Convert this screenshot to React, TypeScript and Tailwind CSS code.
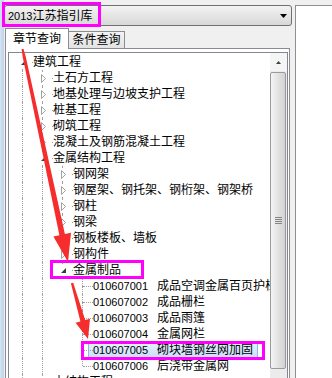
import React from 'react';

type Row = {
  label: string;
  code?: string;
  glyph?: 'open' | 'closed';
  guides: boolean[];
  up: boolean;
  down: boolean;
  selected?: boolean;
};

const L2 = [true];
const L3 = [true, true];
const L4 = [true, true, false];

const rows: Row[] = [
  { label: '建筑工程', glyph: 'open', guides: [], up: false, down: true },
  { label: '土石方工程', glyph: 'closed', guides: L2, up: true, down: true },
  { label: '地基处理与边坡支护工程', glyph: 'closed', guides: L2, up: true, down: true },
  { label: '桩基工程', glyph: 'closed', guides: L2, up: true, down: true },
  { label: '砌筑工程', glyph: 'closed', guides: L2, up: true, down: true },
  { label: '混凝土及钢筋混凝土工程', glyph: 'closed', guides: L2, up: true, down: true },
  { label: '金属结构工程', glyph: 'open', guides: L2, up: true, down: true },
  { label: '钢网架', glyph: 'closed', guides: L3, up: true, down: true },
  { label: '钢屋架、钢托架、钢桁架、钢架桥', glyph: 'closed', guides: L3, up: true, down: true },
  { label: '钢柱', glyph: 'closed', guides: L3, up: true, down: true },
  { label: '钢梁', glyph: 'closed', guides: L3, up: true, down: true },
  { label: '钢板楼板、墙板', glyph: 'closed', guides: L3, up: true, down: true },
  { label: '钢构件', glyph: 'closed', guides: L3, up: true, down: true },
  { label: '金属制品', glyph: 'open', guides: L3, up: true, down: false },
  { code: '010607001', label: '成品空调金属百页护栏', guides: L4, up: true, down: true },
  { code: '010607002', label: '成品栅栏', guides: L4, up: true, down: true },
  { code: '010607003', label: '成品雨篷', guides: L4, up: true, down: true },
  { code: '010607004', label: '金属网栏', guides: L4, up: true, down: true },
  { code: '010607005', label: '砌块墙钢丝网加固', guides: L4, up: true, down: true, selected: true },
  { code: '010607006', label: '后浇带金属网', guides: L4, up: true, down: false },
  { label: '木结构工程', glyph: 'closed', guides: L2, up: true, down: true },
];

function TreeRow({ row }: { row: Row }) {
  return (
    <div className="flex h-4 items-start whitespace-nowrap">
      {row.guides.map((on, i) => (
        <div key={i} className="h-4 w-5 shrink-0">
          {on && <div className="h-4 w-[10px] border-r border-dotted border-[#a0a0a0]" />}
        </div>
      ))}
      <div className="relative flex h-4 w-5 shrink-0">
        <div className="flex w-[10px] flex-col">
          <div className={row.up ? 'h-2 border-r border-dotted border-[#a0a0a0]' : 'h-2'} />
          <div className={row.down ? 'h-2 border-r border-dotted border-[#a0a0a0]' : 'h-2'} />
        </div>
        <div className="flex-1 pt-2">
          <div className="border-t border-dotted border-[#a0a0a0]" />
        </div>
        {row.glyph && (
          <div className="absolute left-[4px] top-[3px] h-[11px] w-[14px] bg-white">
            {row.glyph === 'open' ? (
              <svg className="ml-[4px] mt-[3px]" width="5" height="5" viewBox="0 0 5 5">
                <polygon points="5,0 5,5 0,5" fill="#3a3a3a" />
              </svg>
            ) : (
              <svg className="ml-[4px] mt-px" width="6" height="9" viewBox="0 0 6 9">
                <polygon points="0.5,0.5 4.5,4.5 0.5,8.5" fill="#fff" stroke="#a2a2a2" />
              </svg>
            )}
          </div>
        )}
      </div>
      <div
        className={
          row.selected
            ? '-ml-[5px] h-4 border border-[#8fb8e6] bg-linear-to-b from-[#e6f0fc] to-[#cbe0fa] pl-[4px] pr-[4px] leading-[14px]'
            : 'h-4 leading-4'
        }
      >
        {row.code && <span className="inline-block w-[64px] text-[11px]">{row.code}</span>}
        {row.label}
      </div>
    </div>
  );
}

function Scrollbar() {
  return (
    <div className="flex w-[17px] shrink-0 flex-col bg-[#ececec]">
      <div className="flex h-[18px] items-center justify-center bg-[#f5f5f5]">
        <svg width="5" height="3" viewBox="0 0 5 3">
          <polygon points="2.5,0 5,3 0,3" fill="#404040" />
        </svg>
      </div>
      <div className="mt-px flex h-[297px] w-[16px] items-center justify-center rounded-[2px] border border-[#9a9a9a] bg-linear-to-r from-[#f4f4f4] to-[#d2d2d2]">
        <div className="flex flex-col gap-px">
          {[0, 1, 2, 3].map((i) => (
            <div key={i} className="h-px w-[7px] bg-[#858585]" />
          ))}
        </div>
      </div>
    </div>
  );
}

export default function App() {
  return (
    <div className="relative flex h-[378px] w-[332px] overflow-hidden bg-[#f0f0f0] font-['Liberation_Sans','Noto_Sans_CJK_SC',sans-serif] text-[12px] text-black">
      <div className="w-[4px] shrink-0 bg-linear-to-r from-[#d6e4f3] to-[#bcd1e9]" />

      <div className="flex h-[400px] w-[288px] shrink-0 flex-col self-start">
        {/* library selector */}
        <div className="mt-[5px] flex h-[21px] items-center justify-between rounded-[3px] border border-[#707070] bg-linear-to-b from-[#f3f3f3] to-[#d8d8d8] pl-[3px] pr-[4px]">
          <span>
            <span className="text-[11px]">2013</span>江苏指引库
          </span>
          <svg width="7" height="4" viewBox="0 0 7 4">
            <polygon points="0,0 7,0 3.5,4" fill="#000" />
          </svg>
        </div>

        {/* tabs */}
        <div className="mt-[2px] flex h-[20px] items-start pl-px">
          <div className="relative z-10 flex h-[21px] w-[64px] items-center justify-center border border-b-0 border-[#898c95] bg-white">
            章节查询
          </div>
          <div className="-ml-px mt-[3px] flex h-[17px] w-[57px] items-center justify-center border border-b-0 border-[#898c95] bg-linear-to-b from-[#f3f3f3] to-[#e3e3e3]">
            条件查询
          </div>
        </div>

        {/* tab page */}
        <div className="ml-px flex min-h-0 w-[285px] flex-1 flex-col border border-[#898c95] bg-white pl-[2px] pr-px pt-[3px]">
          <div className="flex min-h-0 flex-1 border border-[#828790]">
            <div className="min-w-0 flex-1 overflow-hidden pl-[4px] pt-px">
              {rows.map((row, i) => (
                <TreeRow key={i} row={row} />
              ))}
            </div>
            <Scrollbar />
          </div>
        </div>
      </div>

      <div className="ml-[3px] mt-[5px] flex-1 border-l border-t border-[#8e8f8f] bg-white" />

      {/* annotations */}
      <div className="absolute left-[2px] top-[2px] h-[25px] w-[99px] border-[3px] border-[#ff00ff]" />
      <div className="absolute left-[50px] top-[260px] h-[19px] w-[94px] border-[3px] border-[#ff00ff]" />
      <div className="absolute left-[81px] top-[341px] h-[19px] w-[184px] border-[3px] border-[#ff00ff]" />
      <svg className="pointer-events-none absolute left-0 top-0" width="332" height="378" viewBox="0 0 332 378">
        <polygon
          points="20,37 25.7,56.5 64.9,234 71,232.7 68,262 53.4,236.5 59.4,235.2 22.7,57.1"
          fill="#f52d2d"
        />
        <polygon
          points="73.2,282.7 85.2,320 90,318.7 88,339 75.6,322.8 80.4,321.4 70.9,283.3"
          fill="#f52d2d"
        />
      </svg>
    </div>
  );
}
